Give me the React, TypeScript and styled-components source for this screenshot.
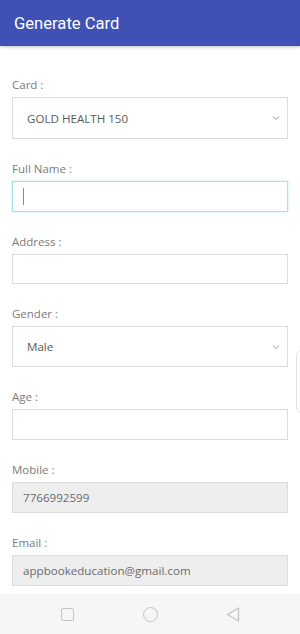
import React from "react";
import styled, { createGlobalStyle } from "styled-components";

const Global = createGlobalStyle`
  html, body { margin: 0; padding: 0; background: #fff; }
  body { font-family: "Open Sans", "Liberation Sans", sans-serif; }
  * { box-sizing: border-box; }
`;

const Page = styled.div`
  position: relative;
  width: 300px;
  height: 634px;
  display: flex;
  flex-direction: column;
  overflow: hidden;
  background: #fff;
`;

const AppBar = styled.header`
  height: 46px;
  flex: none;
  background: #3f51b5;
  display: flex;
  align-items: center;
  padding: 0 14px;
  box-shadow: 0 1px 3px rgba(0, 0, 0, 0.25);
  position: relative;
  z-index: 1;
`;

const Title = styled.h1`
  margin: 0;
  font-family: Roboto, "Liberation Sans", sans-serif;
  font-weight: 400;
  font-size: 16.6px;
  color: #fff;
`;

const Form = styled.div`
  flex: 1;
  display: flex;
  flex-direction: column;
  gap: 22px;
  padding: 31px 12px 0;
`;

const Field = styled.div`
  display: flex;
  flex-direction: column;
  gap: 4px;
`;

const Label = styled.label`
  font-size: 11.5px;
  line-height: 16px;
  color: #7a7a7a;
`;

const Box = styled.div<{ $h: number; $variant?: "focus" | "disabled" | "normal"; $pad?: number }>`
  height: ${(p) => p.$h}px;
  display: flex;
  align-items: center;
  justify-content: space-between;
  padding: 0 ${(p) => p.$pad ?? 10}px;
  font-size: 11.6px;
  color: ${(p) => (p.$variant === "disabled" ? "#6a6a6a" : "#5a5a5a")};
  background: ${(p) => (p.$variant === "disabled" ? "#eeeeee" : "#fff")};
  border: 1px solid ${(p) => (p.$variant === "focus" ? "#a6e3ec" : "#dcdcdc")};
  box-shadow: ${(p) => (p.$variant === "focus" ? "0 0 2px rgba(120, 215, 230, 0.6)" : "none")};
`;

const Caret = styled.span`
  width: 1px;
  height: 17px;
  background: #888;
`;

const Chevron = () => (
  <svg width="8" height="6" viewBox="0 0 8 6" style={{ marginRight: -7 }}>
    <path d="M1 1.5 L4 4.5 L7 1.5" fill="none" stroke="#999" strokeWidth="1" />
  </svg>
);

const EdgeTab = styled.div`
  position: absolute;
  left: 296px;
  top: 350px;
  width: 20px;
  height: 63px;
  border: 1px solid #e2e2e2;
  border-radius: 6px;
  background: #fff;
`;

const NavBar = styled.nav`
  height: 40px;
  flex: none;
  background: #f6f6f6;
  display: flex;
  align-items: center;
  justify-content: space-between;
  padding: 0 60px 0 61px;
`;

const NavSquare = styled.span`
  width: 13px;
  height: 13px;
  border: 1.3px solid #c4c4c4;
  border-radius: 2px;
`;

const NavCircle = styled.span`
  width: 15px;
  height: 15px;
  border: 1.3px solid #c4c4c4;
  border-radius: 50%;
`;

export default function App() {
  return (
    <Page>
      <Global />
      <AppBar>
        <Title>Generate Card</Title>
      </AppBar>
      <Form>
        <Field>
          <Label>Card :</Label>
          <Box $h={42} $pad={14}>
            <span>GOLD HEALTH 150</span>
            <Chevron />
          </Box>
        </Field>
        <Field>
          <Label>Full Name :</Label>
          <Box $h={31} $variant="focus">
            <Caret />
          </Box>
        </Field>
        <Field>
          <Label>Address :</Label>
          <Box $h={30} />
        </Field>
        <Field>
          <Label>Gender :</Label>
          <Box $h={41} $pad={14}>
            <span>Male</span>
            <Chevron />
          </Box>
        </Field>
        <Field>
          <Label>Age :</Label>
          <Box $h={31} />
        </Field>
        <Field>
          <Label>Mobile :</Label>
          <Box $h={31} $variant="disabled">
            <span>7766992599</span>
          </Box>
        </Field>
        <Field>
          <Label>Email :</Label>
          <Box $h={31} $variant="disabled">
            <span>appbookeducation@gmail.com</span>
          </Box>
        </Field>
      </Form>
      <NavBar>
        <NavSquare />
        <NavCircle />
        <svg width="14" height="15" viewBox="0 0 14 15">
          <path d="M12.5 1 L1.5 7.5 L12.5 14 Z" fill="none" stroke="#c4c4c4" strokeWidth="1.3" strokeLinejoin="round" />
        </svg>
      </NavBar>
      <EdgeTab />
    </Page>
  );
}
